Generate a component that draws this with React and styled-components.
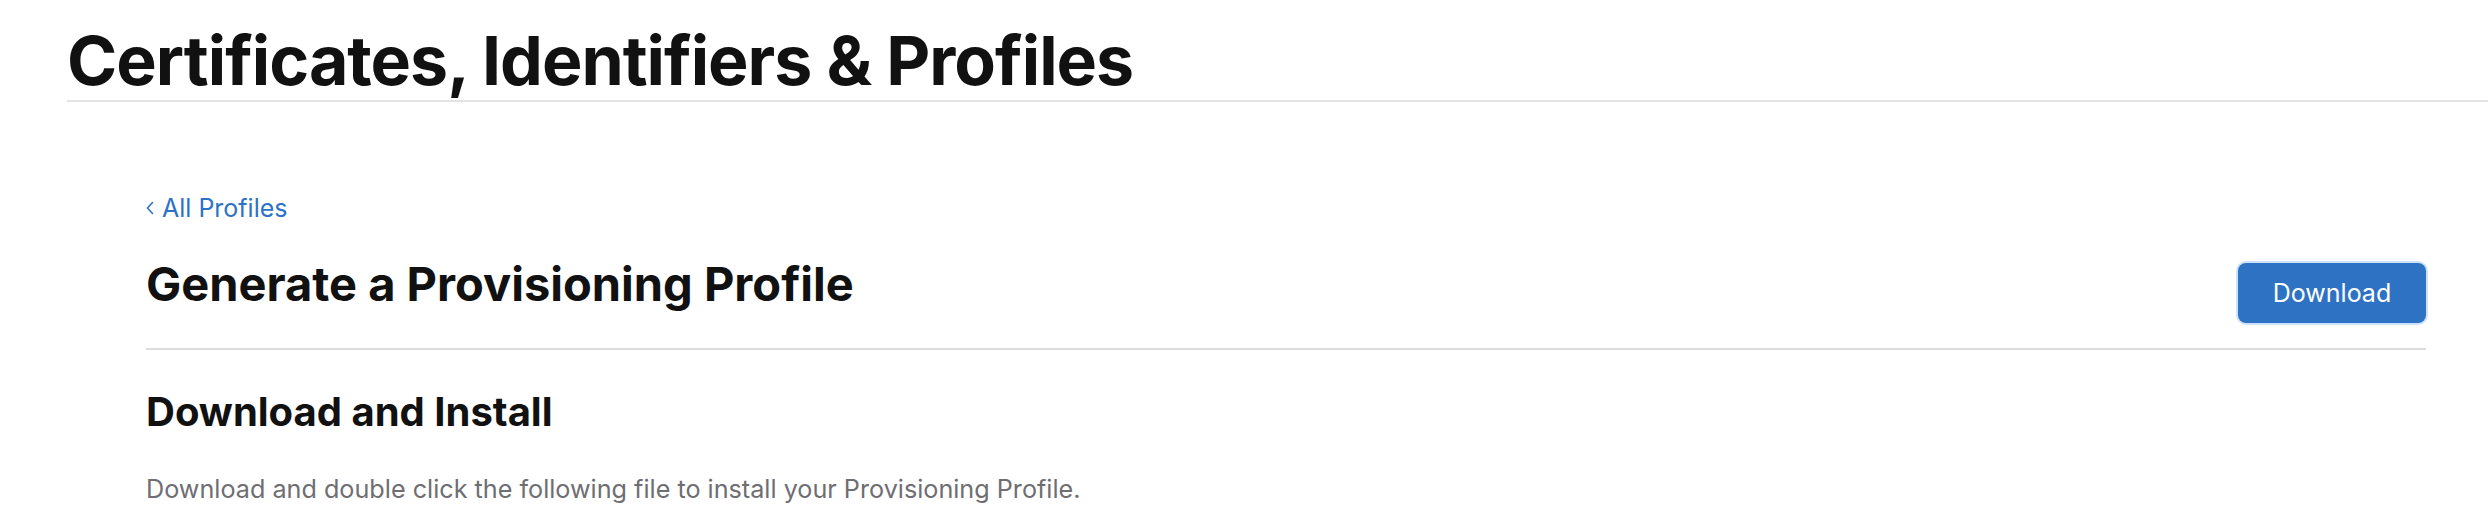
import React from 'react';
import styled, { createGlobalStyle } from 'styled-components';

const Global = createGlobalStyle`
  html, body {
    margin: 0;
    padding: 0;
    background: #fff;
  }
  body {
    font-family: Inter, "Noto Sans", "Liberation Sans", sans-serif;
    color: #111;
  }
`;

const Header = styled.header`
  margin-left: 67px;
  padding-top: 26px;
  border-bottom: 2px solid #e4e4e4;
  height: 74px;
`;

const PageTitle = styled.h1`
  margin: 0;
  font-size: 68px;
  line-height: 68px;
  font-weight: 700;
  letter-spacing: -1px;
`;

const Content = styled.main`
  padding: 0 62px 0 146px;
`;

const BackLink = styled.a`
  display: inline-flex;
  align-items: center;
  gap: 8px;
  margin-top: 91px;
  font-size: 25px;
  line-height: 30px;
  color: #2d72c6;
  text-decoration: none;
  cursor: pointer;
`;

const TitleRow = styled.div`
  display: flex;
  justify-content: space-between;
  align-items: flex-start;
  margin-top: 33px;
  padding-bottom: 25px;
  border-bottom: 2px solid #dcdcdc;
`;

const Title = styled.h2`
  margin: 0;
  font-size: 47px;
  line-height: 56px;
  font-weight: 700;
`;

const Button = styled.button`
  margin-top: 7px;
  width: 188px;
  height: 60px;
  border: none;
  border-radius: 8px;
  background: #2e72c3;
  box-shadow: 0 0 0 2px #cfe2fb;
  color: #fff;
  font-family: inherit;
  font-size: 25px;
  cursor: pointer;
`;

const SectionTitle = styled.h3`
  margin: 38px 0 0;
  font-size: 40px;
  line-height: 48px;
  font-weight: 700;
`;

const Text = styled.p`
  margin: 38px 0 0;
  font-size: 25.2px;
  line-height: 30px;
  color: #6e6e73;
`;

export default function App() {
  return (
    <>
      <Global />
      <Header>
        <PageTitle>Certificates, Identifiers &amp; Profiles</PageTitle>
      </Header>
      <Content>
        <BackLink>
          <svg width="8" height="14" viewBox="0 0 8 14" fill="none">
            <path d="M6.5 1.5L1.5 7l5 5.5" stroke="currentColor" strokeWidth="1.6" strokeLinecap="round" strokeLinejoin="round" />
          </svg>
          All Profiles
        </BackLink>
        <TitleRow>
          <Title>Generate a Provisioning Profile</Title>
          <Button>Download</Button>
        </TitleRow>
        <SectionTitle>Download and Install</SectionTitle>
        <Text>Download and double click the following file to install your Provisioning Profile.</Text>
      </Content>
    </>
  );
}
